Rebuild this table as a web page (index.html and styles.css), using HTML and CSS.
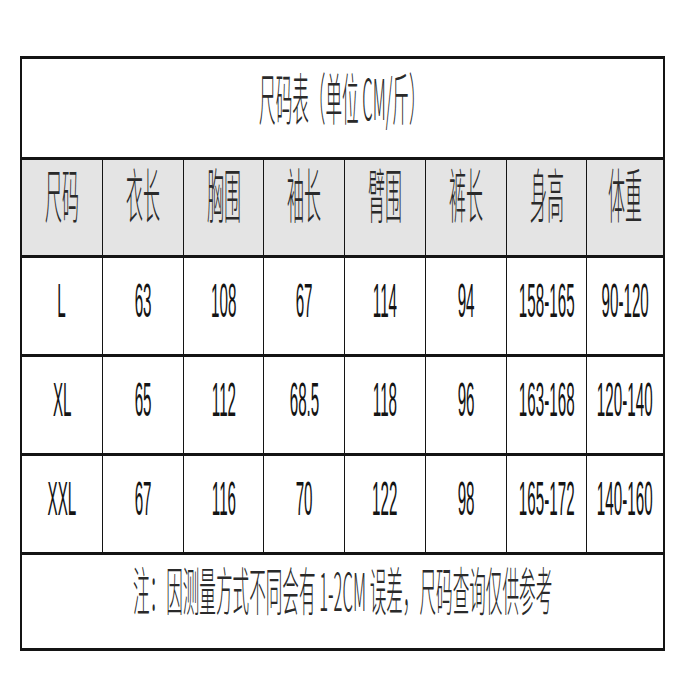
FILE: index.html
```html
<!DOCTYPE html>
<html lang="zh">
<head>
<meta charset="utf-8">
<title>尺码表</title>
<link rel="stylesheet" href="styles.css">
</head>
<body>
<div class="chart">
  <div class="row row-title">
    <div class="cell cell-wide"><span class="t t-title">尺码表（单位 CM/斤）</span></div>
  </div>
  <div class="row row-head">
    <div class="cell"><span class="t t-head">尺码</span></div>
    <div class="cell"><span class="t t-head">衣长</span></div>
    <div class="cell"><span class="t t-head">胸围</span></div>
    <div class="cell"><span class="t t-head">袖长</span></div>
    <div class="cell"><span class="t t-head">臂围</span></div>
    <div class="cell"><span class="t t-head">裤长</span></div>
    <div class="cell"><span class="t t-head">身高</span></div>
    <div class="cell"><span class="t t-head">体重</span></div>
  </div>
  <div class="row row-data">
    <div class="cell"><span class="t t-num">L</span></div>
    <div class="cell"><span class="t t-num">63</span></div>
    <div class="cell"><span class="t t-num">108</span></div>
    <div class="cell"><span class="t t-num">67</span></div>
    <div class="cell"><span class="t t-num">114</span></div>
    <div class="cell"><span class="t t-num">94</span></div>
    <div class="cell"><span class="t t-num">158-165</span></div>
    <div class="cell"><span class="t t-num">90-120</span></div>
  </div>
  <div class="row row-data">
    <div class="cell"><span class="t t-num">XL</span></div>
    <div class="cell"><span class="t t-num">65</span></div>
    <div class="cell"><span class="t t-num">112</span></div>
    <div class="cell"><span class="t t-num">68.5</span></div>
    <div class="cell"><span class="t t-num">118</span></div>
    <div class="cell"><span class="t t-num">96</span></div>
    <div class="cell"><span class="t t-num">163-168</span></div>
    <div class="cell"><span class="t t-num">120-140</span></div>
  </div>
  <div class="row row-data">
    <div class="cell"><span class="t t-num">XXL</span></div>
    <div class="cell"><span class="t t-num">67</span></div>
    <div class="cell"><span class="t t-num">116</span></div>
    <div class="cell"><span class="t t-num">70</span></div>
    <div class="cell"><span class="t t-num">122</span></div>
    <div class="cell"><span class="t t-num">98</span></div>
    <div class="cell"><span class="t t-num">165-172</span></div>
    <div class="cell"><span class="t t-num">140-160</span></div>
  </div>
  <div class="row row-foot">
    <div class="cell cell-wide"><span class="t t-foot">注：因测量方式不同会有 1-2CM 误差，尺码查询仅供参考</span></div>
  </div>
</div>
</body>
</html>
```
FILE: styles.css
```css
html, body {
  margin: 0;
  padding: 0;
  background: #ffffff;
}

body {
  font-family: "Noto Sans CJK SC", "Liberation Sans", sans-serif;
  color: #161616;
}

.chart {
  margin: 56px 0 0 20px;
  width: 645px;
  box-sizing: border-box;
  border-left: 2px solid #141414;
  border-right: 2px solid #141414;
  border-bottom: 3px solid #141414;
}

.row {
  display: grid;
  grid-template-columns: 80px 81px 80px 81px 81px 81px 80px 77px;
  box-sizing: border-box;
  border-top: 3px solid #141414;
}

.row-title { height: 101px; }
.row-head { height: 98px; background: #e4e4e4; }
.row-data { height: 99px; }
.row-foot { height: 96px; }

.cell {
  display: flex;
  align-items: center;
  justify-content: center;
  border-left: 1px solid #141414;
  overflow: visible;
}

.cell:first-child { border-left: none; }

.cell-wide {
  grid-column: 1 / -1;
}

.row-title .cell { padding-bottom: 20px; }
.row-head .cell { padding-bottom: 27px; }
.row-data .cell { padding-bottom: 12px; }
.row-foot .cell { padding-bottom: 24px; }

.t {
  display: inline-block;
  white-space: nowrap;
  line-height: 1;
  font-size: 20px;
  transform-origin: 50% 50%;
}

.t-num {
  font-family: "Liberation Sans", Arial, sans-serif;
  transform: scale(0.76, 2.45);
  color: #141414;
}

.t-head {
  font-family: "Noto Sans CJK SC", sans-serif;
  font-weight: 300;
  transform: scale(0.85, 2.95);
  color: #2a2a2a;
}

.t-title {
  font-family: "Noto Sans CJK SC", sans-serif;
  font-weight: 300;
  transform: scale(0.83, 2.8);
  color: #2a2a2a;
}

.t-foot {
  font-family: "Noto Sans CJK SC", sans-serif;
  font-weight: 300;
  transform: scale(0.83, 2.6);
  color: #2a2a2a;
}
```
